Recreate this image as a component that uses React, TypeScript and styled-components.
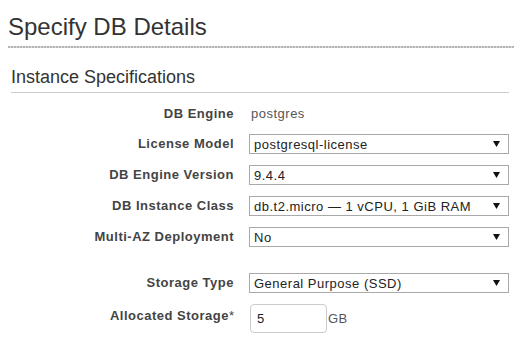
import React from "react";
import styled, { createGlobalStyle } from "styled-components";

const GlobalStyle = createGlobalStyle`
  html, body {
    margin: 0;
    padding: 0;
    background: #ffffff;
    font-family: "Liberation Sans", Arial, sans-serif;
  }
`;

const Page = styled.div`
  padding-top: 13px;
  width: 514px;
  box-sizing: border-box;
`;

const Title = styled.h1`
  margin: 0 0 0 8px;
  padding-bottom: 7px;
  font-size: 24px;
  line-height: 28px;
  font-weight: normal;
  color: #333333;
  background: repeating-linear-gradient(90deg, #b4b4b4 0 2px, #dcdcdc 2px 3px)
    left bottom / 100% 2px no-repeat;
`;

const Section = styled.section`
  margin: 19px 5px 0 11px;
`;

const SectionTitle = styled.h2`
  margin: 0;
  padding-bottom: 4px;
  font-size: 18px;
  line-height: 21px;
  font-weight: normal;
  color: #333333;
  border-bottom: 1px solid #cccccc;
`;

const Form = styled.div`
  margin-top: 12px;
  display: grid;
  grid-template-columns: 223px 260px;
  column-gap: 15px;
  row-gap: 11px;
  align-items: center;
`;

const Label = styled.div<{ $top?: boolean }>`
  text-align: right;
  font-size: 13px;
  line-height: 18px;
  letter-spacing: 0.5px;
  font-weight: bold;
  color: #444444;
  align-self: ${(p) => (p.$top ? "start" : "center")};
  padding-top: ${(p) => (p.$top ? "3px" : "0")};
`;

const Required = styled.span`
  font-weight: normal;
  color: #444444;
  letter-spacing: 0;
`;

const StaticValue = styled.div`
  font-size: 13px;
  line-height: 18px;
  letter-spacing: 0.5px;
  color: #555555;
  padding-left: 2px;
`;

const SelectBox = styled.div`
  height: 20px;
  box-sizing: border-box;
  border: 1px solid #a9a9a9;
  background: #ffffff;
  padding: 0 8px 0 4px;
  display: flex;
  align-items: center;
  justify-content: space-between;
  font-size: 13px;
  letter-spacing: 0.5px;
  color: #222222;
  white-space: nowrap;
`;

const Spacer = styled.div`
  grid-column: 1 / -1;
  height: 4px;
`;

const InputRow = styled.div`
  display: flex;
  align-items: center;
`;

const NumberInput = styled.input`
  width: 77px;
  height: 29px;
  box-sizing: border-box;
  border: 1px solid #cccccc;
  border-radius: 4px;
  background: #ffffff;
  padding: 0 6px;
  margin: 0 0 0 1px;
  font-family: "Liberation Sans", Arial, sans-serif;
  font-size: 13px;
  letter-spacing: 0.5px;
  color: #222222;
  outline: none;
`;

const Unit = styled.span`
  font-size: 13px;
  letter-spacing: 0.5px;
  color: #555555;
  margin-left: 1px;
`;

const Arrow = () => (
  <svg width="7" height="6" viewBox="0 0 7 6">
    <polygon points="0,0 7,0 3.5,6" fill="#111" />
  </svg>
);

const Select = ({ value }: { value: string }) => (
  <SelectBox>
    <span>{value}</span>
    <Arrow />
  </SelectBox>
);

export default function App() {
  return (
    <Page>
      <GlobalStyle />
      <Title>Specify DB Details</Title>
      <Section>
        <SectionTitle>Instance Specifications</SectionTitle>
        <Form>
          <Label>DB Engine</Label>
          <StaticValue>postgres</StaticValue>

          <Label>License Model</Label>
          <Select value="postgresql-license" />

          <Label>DB Engine Version</Label>
          <Select value="9.4.4" />

          <Label>DB Instance Class</Label>
          <Select value="db.t2.micro — 1 vCPU, 1 GiB RAM" />

          <Label>Multi-AZ Deployment</Label>
          <Select value="No" />

          <Spacer />

          <Label>Storage Type</Label>
          <Select value="General Purpose (SSD)" />

          <Label $top>
            Allocated Storage<Required>*</Required>
          </Label>
          <InputRow>
            <NumberInput type="text" defaultValue="5" />
            <Unit>GB</Unit>
          </InputRow>
        </Form>
      </Section>
    </Page>
  );
}
